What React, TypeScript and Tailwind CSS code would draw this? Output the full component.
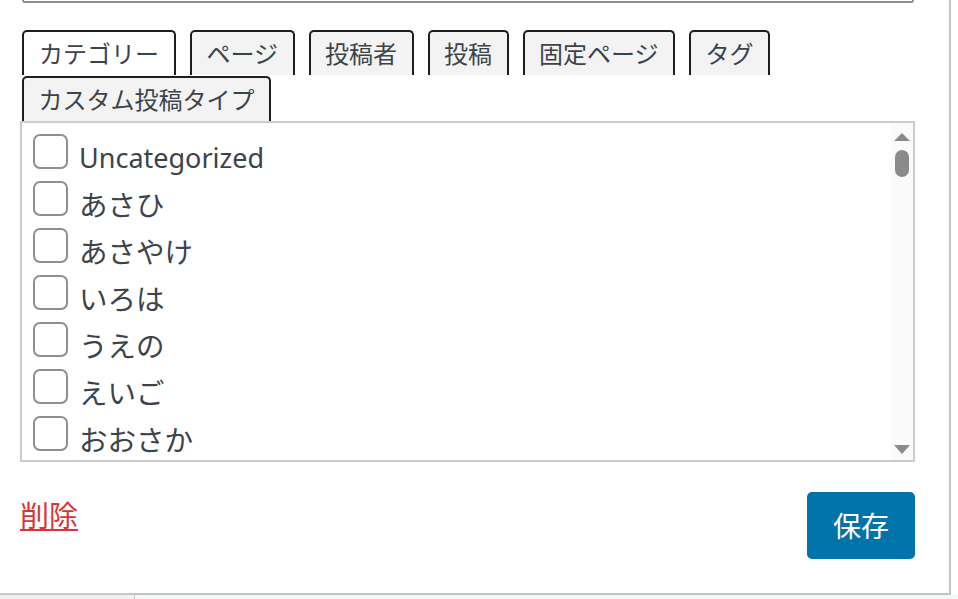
const tabs = [
  { label: "カテゴリー", active: true },
  { label: "ページ", active: false },
  { label: "投稿者", active: false },
  { label: "投稿", active: false },
  { label: "固定ページ", active: false },
  { label: "タグ", active: false },
  { label: "カスタム投稿タイプ", active: false },
];

const terms = ["Uncategorized", "あさひ", "あさやけ", "いろは", "うえの", "えいご", "おおさか"];

function Scrollbar() {
  return (
    <div className="flex w-[22px] flex-col items-center bg-[#fafafa]">
      <svg width="16" height="8" viewBox="0 0 16 8" className="mt-[10px]">
        <path d="M8 0 L16 8 L0 8 Z" fill="#8a8a8a" />
      </svg>
      <div className="mt-[9px] h-[27px] w-[14px] rounded-full bg-[#8a8a8a]" />
      <div className="flex-1" />
      <svg width="16" height="9" viewBox="0 0 16 9" className="mb-[6px]">
        <path d="M0 0 L16 0 L8 9 Z" fill="#8a8a8a" />
      </svg>
    </div>
  );
}

export default function App() {
  return (
    <div
      className="h-[599px] w-[958px] overflow-hidden bg-white text-[#3c434a]"
      style={{ fontFamily: '"Noto Sans", "Noto Sans CJK JP", sans-serif' }}
    >
      <div className="h-[595px] w-[951px] border-r-2 border-b-2 border-[#c3c4c7] pl-[20px] pr-[34px]">
        {/* bottom edge of the field above */}
        <div className="ml-[2px] mr-[1px] h-[3px] rounded-b-[4px] border-x-2 border-b-2 border-[#8c8f94]" />

        <div className="mt-[27px] ml-[2px] flex flex-wrap gap-x-[14px] gap-y-[1px]">
          {tabs.map((tab) => (
            <button
              key={tab.label}
              type="button"
              className={
                tab.active
                  ? "flex h-[45px] items-center rounded-t-[5px] border-2 border-b-0 border-[#1e1e1e] bg-white px-[15px] text-[24px] leading-none"
                  : "flex h-[45px] items-center rounded-t-[5px] border-2 border-b-0 border-[#1e1e1e] bg-[#f3f3f3] px-[14.5px] text-[24px] leading-none"
              }
            >
              {tab.label}
            </button>
          ))}
        </div>

        <div className="flex h-[341px] border-2 border-[#cccccc]">
          <ul className="flex-1 overflow-hidden pt-[11px] pl-[11px]">
            {terms.map((term) => (
              <li key={term} className="flex h-[47px] items-start gap-[11px]">
                <span className="h-[35px] w-[35px] shrink-0 rounded-[7px] border-2 border-[#8c8f94] bg-white" />
                <span
                  className={
                    /^[\x00-\x7f]+$/.test(term)
                      ? "mt-[4px] text-[27px] leading-[40px]"
                      : "mt-[4px] text-[28.5px] leading-[40px]"
                  }
                >
                  {term}
                </span>
              </li>
            ))}
          </ul>
          <Scrollbar />
        </div>

        <div className="mt-[30px] flex items-start justify-between">
          <a href="#" className="mt-[4px] text-[29px] leading-[40px] text-[#d63638] underline">
            削除
          </a>
          <button
            type="button"
            className="flex h-[67px] w-[108px] items-center justify-center rounded-[5px] bg-[#0073aa] text-[28px] text-white"
          >
            保存
          </button>
        </div>
      </div>
      <div className="flex h-[4px]">
        <div className="w-[135px] border-r border-[#c3c4c7] bg-[#f0f0f1]" />
        <div className="flex-1 bg-[#f6f7f7]" />
      </div>
    </div>
  );
}
